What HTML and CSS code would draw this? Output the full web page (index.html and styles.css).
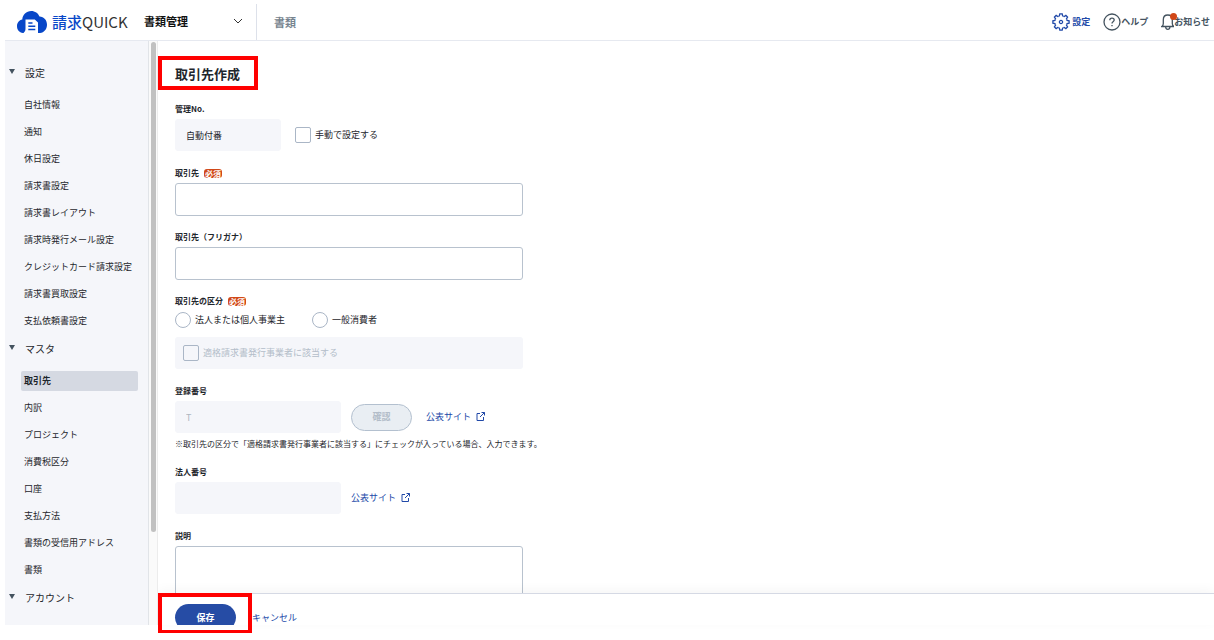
FILE: index.html
```html
<!DOCTYPE html>
<html lang="ja">
<head>
<meta charset="utf-8">
<title>取引先作成</title>
<link rel="stylesheet" href="styles.css">
</head>
<body>
<div class="app">
  <header class="header">
    <a class="logo" href="#">
      <svg class="logo-mark" viewBox="0 0 30 22" aria-hidden="true">
        <path d="M6 22C2 21.500 0 18.500 0 15.200C0 11.800 2.200 9.200 5.300 8.600C5.500 3.600 9.400 0 14.200 0C18 0 21.200 2.200 22.500 5.600C26.900 5.800 30 9.200 30 13.700C30 18 27.200 21.500 23 22Z" fill="#0847c8"/>
        <path d="M6.500 22C8.300 20.500 8.500 19 8.500 17V8.500H17.800L21 11.500V22Z" fill="#fff"/>
        <path d="M11.300 12H15.500M11.300 15.200H18.300M11.300 18.400H18.300" stroke="#0847c8" stroke-width="1.500"/>
      </svg>
      <span class="logo-ja">請求</span><span class="logo-en">QUICK</span>
    </a>
    <div class="switcher">
      <select class="switcher-select" aria-label="メニュー"><option>書類管理</option></select>
      <svg class="switcher-arrow" viewBox="0 0 10 6" aria-hidden="true"><path d="M1 1l4 4 4-4"/></svg>
    </div>
    <a class="crumb" href="#">書類</a>
    <nav class="tools">
      <a class="tool tool-active" href="#">
        <svg class="tool-icon" viewBox="-9 -9 18 18" aria-hidden="true">
          <defs><path id="tooth" d="M-2.370-5.730L-1.600-6.100L-1.200-8.100H1.200L1.600-6.100L2.370-5.730"/></defs>
          <use href="#tooth"/><use href="#tooth" transform="rotate(45)"/><use href="#tooth" transform="rotate(90)"/><use href="#tooth" transform="rotate(135)"/><use href="#tooth" transform="rotate(180)"/><use href="#tooth" transform="rotate(225)"/><use href="#tooth" transform="rotate(270)"/><use href="#tooth" transform="rotate(315)"/>
          <circle r="1.600"/>
        </svg>
        <span class="tool-gap">設定</span>
      </a>
      <a class="tool" href="#">
        <svg class="tool-icon" viewBox="0 0 18 18" aria-hidden="true"><circle cx="9" cy="9" r="8"/><path d="M6.800 7.200c0-1.300 1-2.100 2.200-2.100s2.200.8 2.200 2c0 1.600-2.200 1.700-2.200 3.300M9 12v1.300"/></svg>
        <span>ヘルプ</span>
      </a>
      <a class="tool" href="#">
        <svg class="bell-icon" viewBox="0 0 13 18" aria-hidden="true"><path d="M.8 13.500c1.200-.8 1.500-1.600 1.500-3V6.800C2.300 3.800 4.200 2 6.800 2s4.500 1.800 4.500 4.800v3.700c0 1.400.3 2.200 1.500 3zM4.600 14c.2 1.700 1 2.400 2.200 2.400s2-.7 2.200-2.400"/></svg>
        <span class="bell-dot"></span>
        <span>お知らせ</span>
      </a>
    </nav>
  </header>
  <div class="body">
    <nav class="sidebar">
      <h2 class="group">設定</h2>
      <ul class="items">
        <li><a class="item" href="#">自社情報</a></li>
        <li><a class="item" href="#">通知</a></li>
        <li><a class="item" href="#">休日設定</a></li>
        <li><a class="item" href="#">請求書設定</a></li>
        <li><a class="item" href="#">請求書レイアウト</a></li>
        <li><a class="item" href="#">請求時発行メール設定</a></li>
        <li><a class="item" href="#">クレジットカード請求設定</a></li>
        <li><a class="item" href="#">請求書買取設定</a></li>
        <li><a class="item" href="#">支払依頼書設定</a></li>
      </ul>
      <h2 class="group">マスタ</h2>
      <ul class="items">
        <li><a class="item item-current" href="#">取引先</a></li>
        <li><a class="item" href="#">内訳</a></li>
        <li><a class="item" href="#">プロジェクト</a></li>
        <li><a class="item" href="#">消費税区分</a></li>
        <li><a class="item" href="#">口座</a></li>
        <li><a class="item" href="#">支払方法</a></li>
        <li><a class="item" href="#">書類の受信用アドレス</a></li>
        <li><a class="item" href="#">書類</a></li>
      </ul>
      <h2 class="group">アカウント</h2>
    </nav>
    <div class="scrollbar"><div class="thumb"></div></div>
    <main class="main">
      <form class="form">
        <div class="fields">
          <h1 class="title marked">取引先作成</h1>
          <div class="field">
            <label class="label" for="no">管理No.</label>
            <div class="row">
              <input class="input input-off input-short" id="no" value="自動付番" disabled>
              <label class="choice"><input class="check" type="checkbox">手動で設定する</label>
            </div>
          </div>
          <div class="field">
            <label class="label" for="name">取引先<span class="required">必須</span></label>
            <input class="input" id="name">
          </div>
          <div class="field">
            <label class="label" for="kana">取引先（フリガナ）</label>
            <input class="input" id="kana">
          </div>
          <div class="field" role="radiogroup" aria-labelledby="kind">
            <div class="label" id="kind">取引先の区分<span class="required">必須</span></div>
            <div class="radios">
              <label class="choice"><input class="check radio" type="radio" name="kind">法人または個人事業主</label>
              <label class="choice"><input class="check radio" type="radio" name="kind">一般消費者</label>
            </div>
            <label class="choice panel"><input class="check" type="checkbox" disabled>適格請求書発行事業者に該当する</label>
          </div>
          <div class="field">
            <label class="label" for="reg">登録番号</label>
            <div class="row-tight">
              <input class="input input-off input-medium" id="reg" placeholder="T" disabled>
              <button class="button button-off" type="button" disabled>確認</button>
              <a class="link link-after" href="#">公表サイト<svg class="ext" viewBox="0 0 9 9" aria-hidden="true"><path d="M4 1.500H1v7h6.500V5M5.500.5h3v3M8.500.5L4 5"/></svg></a>
            </div>
            <p class="note">※取引先の区分で「適格請求書発行事業者に該当する」にチェックが入っている場合、入力できます。</p>
          </div>
          <div class="field">
            <label class="label" for="corp">法人番号</label>
            <div class="row-tight">
              <input class="input input-off input-medium" id="corp" disabled>
              <a class="link" href="#">公表サイト<svg class="ext" viewBox="0 0 9 9" aria-hidden="true"><path d="M4 1.500H1v7h6.500V5M5.500.5h3v3M8.500.5L4 5"/></svg></a>
            </div>
          </div>
          <div class="field">
            <label class="label" for="memo">説明</label>
            <textarea class="input area" id="memo"></textarea>
          </div>
        </div>
        <div class="footer marked">
          <div class="actions">
            <button class="button button-save" type="submit">保存</button>
            <a class="link" href="#">キャンセル</a>
          </div>
        </div>
      </form>
    </main>
  </div>
</div>
</body>
</html>
```
FILE: styles.css
```css
*, *::before, *::after { box-sizing: border-box; }

body {
  margin: 0;
  background: #fff;
  color: #1e262c;
  font: 9px/12px "Noto Sans CJK JP", sans-serif;
}

input, select, button, textarea { font: inherit; color: inherit; }
a { color: inherit; text-decoration: none; }

.app {
  display: flex;
  flex-direction: column;
  height: 100vh;
  padding: 0 0 15px 5px;
}

/* Header */
.header {
  display: flex;
  flex: none;
  align-items: center;
  height: 41px;
  padding: 4px 4px 0 12px;
  border-bottom: 1px solid #e6e9f0;
}
.logo { display: flex; align-items: center; width: 123px; white-space: nowrap; }
.logo-mark { width: 30px; height: 22px; margin-right: 5px; }
.logo-ja { color: #0847c8; font-size: 15px; font-weight: 500; line-height: 22px; }
.logo-en { color: #333; font-size: 15px; line-height: 22px; }

.switcher {
  position: relative;
  align-self: stretch;
  width: 117px;
  border-right: 1px solid #dde1ea;
}
.switcher-select {
  width: 100%;
  height: 34px;
  padding: 0 24px 0 4px;
  border: 0;
  background: none;
  color: #111;
  font-size: 11px;
  font-weight: 700;
  appearance: none;
}
.switcher-arrow {
  position: absolute;
  top: 14px;
  right: 13px;
  width: 10px;
  height: 6px;
  fill: none;
  stroke: #333;
  pointer-events: none;
}
.crumb { margin-left: 17px; color: #77848f; font-size: 11px; font-weight: 700; }

.tools {
  display: flex;
  gap: 13px;
  margin-left: auto;
  color: #44535f;
  font-weight: 700;
}
.tool { display: flex; position: relative; align-items: center; }
.tool-active { color: #2149a8; }
.tool-icon { width: 18px; height: 18px; }
.tool-gap { margin-left: 2px; }
.bell-icon { width: 13px; height: 18px; }
.tool-icon, .bell-icon { fill: none; stroke: currentColor; stroke-width: 1.3; }
.bell-dot {
  position: absolute;
  top: 0;
  left: 9px;
  width: 7px;
  height: 7px;
  border-radius: 50%;
  background: #d14818;
}

/* Sidebar */
.body { display: flex; flex: 1; min-height: 0; }
.sidebar {
  flex: none;
  width: 144px;
  padding: 14px 10px 0 16px;
  overflow: hidden;
  border-right: 1px solid #e1e4e8;
  background: #f5f6fa;
}
.group {
  position: relative;
  margin: 8px 0 12px;
  padding-left: 4px;
  font-size: 10px;
  font-weight: 400;
  line-height: 20px;
}
.group::before {
  content: "";
  position: absolute;
  top: 6px;
  left: -12px;
  border: 3px solid transparent;
  border-top: 5px solid #44535f;
  border-bottom: 0;
}
.items {
  display: flex;
  flex-direction: column;
  gap: 7px;
  margin: 0;
  padding: 0;
  list-style: none;
}
.item {
  display: block;
  padding-left: 3px;
  border-radius: 2px;
  line-height: 20px;
  white-space: nowrap;
}
.item-current { background: #d5d9e2; font-weight: 700; }

.scrollbar {
  flex: none;
  width: 9px;
  padding: 1px 1px 0 2px;
  border-right: 1px solid #ececec;
  background: #fafafa;
}
.thumb { width: 5px; height: 84%; border-radius: 3px; background: #c1c1c1; }

/* Form */
.main { flex: 1; min-width: 0; }
.form { display: flex; flex-direction: column; height: 100%; }
.fields {
  display: flex;
  flex: 1;
  flex-direction: column;
  gap: 16px;
  min-height: 0;
  padding: 23px 17px 0;
  overflow: hidden;
}
.title {
  align-self: flex-start;
  margin: 0 0 3px;
  font-size: 13px;
  font-weight: 700;
  line-height: 20px;
}
.field { flex: none; }
.label {
  display: flex;
  gap: 5px;
  margin-bottom: 4px;
  font-size: 8px;
  font-weight: 700;
}
.required {
  align-self: center;
  padding: 0 1px;
  border-radius: 3px;
  background: #d14818;
  color: #fff;
  line-height: 9px;
}
.input {
  display: block;
  width: 348px;
  height: 33px;
  margin-bottom: -1px;
  padding: 0 10px;
  border: 1px solid #b8c2ce;
  border-radius: 3px;
  background: #fff;
}
.input-off { height: 32px; margin: 0; border-color: #f5f6fa; background: #f5f6fa; }
.input-off::placeholder { color: #aeb6c0; }
.input-short { width: 106px; }
.input-medium { width: 166px; }
.area { height: 64px; resize: none; }
.row, .row-tight { display: flex; align-items: center; gap: 14px; }
.row-tight { gap: 10px; }
.radios { display: flex; gap: 27px; margin: 5px 0 9px; }
.choice { display: flex; align-items: center; gap: 4px; }
.check {
  flex: none;
  width: 16px;
  height: 16px;
  margin: 0;
  border: 1px solid #aab6c6;
  border-radius: 2px;
  background: #fff;
  appearance: none;
}
.radio { border-radius: 50%; }
.panel {
  width: 348px;
  height: 32px;
  padding: 0 8px;
  border-radius: 3px;
  background: #f5f6fa;
  color: #b3bdc9;
}
.panel .check { background: none; }

.button {
  flex: none;
  width: 61px;
  height: 27px;
  padding: 0;
  border: 0;
  border-radius: 14px;
  font-weight: 700;
}
.button-off { border: 1px solid #b3c0cf; background: #e9eef3; color: #b3bdc9; }
.button-save { background: #264ca5; color: #fff; }
.link { color: #2149a8; }
.link-after { margin-left: 4px; }
.ext {
  width: 9px;
  height: 9px;
  margin-left: 5px;
  fill: none;
  stroke: currentColor;
  vertical-align: -1px;
}
.note { margin: 5px 0 0; font-size: 8px; }

.footer {
  flex: none;
  height: 32px;
  border-top: 1px solid #d5d9e4;
  box-shadow: 0 -3px 12px #0000000a;
  clip-path: inset(-12px 0 -8px);
}
.actions {
  display: flex;
  gap: 16px;
  height: 31px;
  padding: 10px 17px 0;
  overflow: hidden;
  line-height: 27px;
}

/* Red callout frames */
.marked { position: relative; }
.marked::after {
  content: "";
  position: absolute;
  border: 4px solid #f00;
  pointer-events: none;
}
.title::after { inset: -8px -18px -6px -17px; }
.footer::after { top: -1px; left: 0; width: 94px; height: 41px; }
```
